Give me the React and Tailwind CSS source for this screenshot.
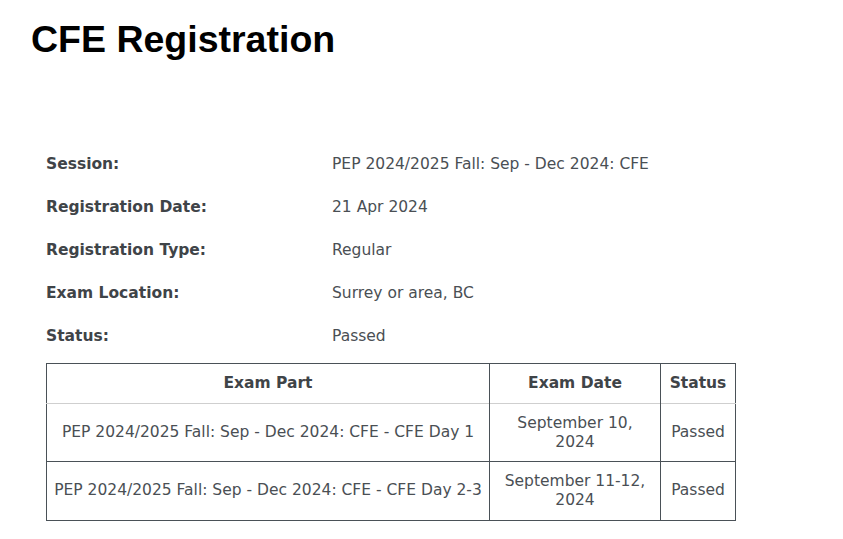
import React from 'react';

const details = [
  { label: 'Session:', value: 'PEP 2024/2025 Fall: Sep - Dec 2024: CFE' },
  { label: 'Registration Date:', value: '21 Apr 2024' },
  { label: 'Registration Type:', value: 'Regular' },
  { label: 'Exam Location:', value: 'Surrey or area, BC' },
  { label: 'Status:', value: 'Passed' },
];

const parts = [
  { part: 'PEP 2024/2025 Fall: Sep - Dec 2024: CFE - CFE Day 1', date: 'September 10, 2024', status: 'Passed' },
  { part: 'PEP 2024/2025 Fall: Sep - Dec 2024: CFE - CFE Day 2-3', date: 'September 11-12, 2024', status: 'Passed' },
];

export default function App() {
  return (
    <div className="min-h-screen bg-white px-[31px] pt-[17px] font-['DejaVu_Sans',sans-serif]">
      <h1 className="font-['Liberation_Sans',Arial,sans-serif] text-[37.5px] font-bold leading-[44px] text-black">
        CFE Registration
      </h1>

      <div className="mt-[82px] pl-[15px]">
        {/* registration details */}
        <div className="flex flex-col">
          {details.map((d) => (
            <div key={d.label} className="flex h-[43px] items-center text-[15.5px] text-[#4a4f54]">
              <span className="w-[286px] font-bold text-[#3f4448]">{d.label}</span>
              <span>{d.value}</span>
            </div>
          ))}
        </div>

        {/* exam parts */}
        <table className="mt-[5px] w-[690px] border-collapse border border-[#4a5157] text-[15.5px] text-[#4a4f54]">
          <thead>
            <tr className="h-[40px] border-b border-[#cfcfcf]">
              <th className="w-[443px] border-r border-[#4a5157] font-bold text-[#3f4448]">Exam Part</th>
              <th className="w-[171px] border-r border-[#4a5157] font-bold text-[#3f4448]">Exam Date</th>
              <th className="font-bold text-[#3f4448]">Status</th>
            </tr>
          </thead>
          <tbody>
            {parts.map((p, i) => (
              <tr key={i} className={i === 0 ? 'h-[58px] border-b border-[#4a5157]' : 'h-[59px]'}>
                <td className="border-r border-[#4a5157] px-[4px] text-center">{p.part}</td>
                <td className="border-r border-[#4a5157] px-[10px] text-center leading-[19px]">{p.date}</td>
                <td className="text-center">{p.status}</td>
              </tr>
            ))}
          </tbody>
        </table>
      </div>
    </div>
  );
}
